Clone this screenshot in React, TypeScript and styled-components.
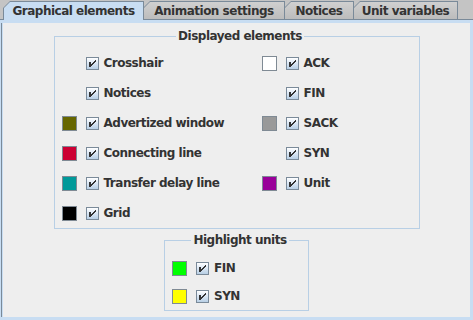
import React from 'react';
import styled, { createGlobalStyle } from 'styled-components';

const GlobalStyle = createGlobalStyle`
  html, body {
    margin: 0;
    padding: 0;
    background: #eeeeee;
  }
  body {
    font-family: 'DejaVu Sans', Verdana, sans-serif;
  }
`;

const Window = styled.div`
  width: 473px;
  height: 320px;
  display: flex;
  flex-direction: column;
  overflow: hidden;
  background: #eeeeee;
`;

const TabStrip = styled.div`
  height: 20px;
  box-sizing: border-box;
  padding: 1px 0 0 3px;
  display: flex;
  align-items: flex-start;
  background: #c4c4c4;
  border-bottom: 1px solid #7a8a99;
`;

const TabEdge = styled.div<{ $active?: boolean; $w: number }>`
  width: ${(p) => p.$w}px;
  height: ${(p) => (p.$active ? 19 : 18)}px;
  margin-left: -1px;
  box-sizing: border-box;
  padding: 1px 1px 0 1px;
  background: #7a8a99;
  clip-path: polygon(0 7px, 7px 0, 100% 0, 100% 100%, 0 100%);
  position: relative;
  z-index: ${(p) => (p.$active ? 1 : 0)};

  &:first-child {
    margin-left: 0;
  }
`;

const TabFace = styled.div<{ $active?: boolean }>`
  height: 100%;
  background: ${(p) => (p.$active ? '#c8ddf2' : 'linear-gradient(#d0d0d0, #bcbcbc)')};
  clip-path: polygon(0 6px, 6px 0, 100% 0, 100% 100%, 0 100%);
  display: flex;
  align-items: center;
  justify-content: center;
  font-weight: bold;
  font-size: 12px;
  letter-spacing: -0.5px;
  color: #333333;
  white-space: nowrap;
`;

const Content = styled.div`
  flex: 1;
  box-sizing: border-box;
  border: 3px solid #c8ddf2;
  border-left-width: 1px;
  box-shadow: inset 1px 0 0 #7a8a99, inset 2px 0 0 #c8ddf2;
  padding: 6px 0 0 2px;
  display: flex;
  flex-direction: column;
  align-items: center;
`;

const Group = styled.fieldset<{ $w: number; $top: number }>`
  width: ${(p) => p.$w}px;
  box-sizing: border-box;
  margin: ${(p) => p.$top}px 0 0 0;
  border: 1px solid #b8cfe5;
  padding: 0 0 0 7px;
  min-inline-size: auto;
`;

const Legend = styled.legend`
  margin: 0 auto;
  padding: 0 2px;
  font-weight: bold;
  font-size: 12px;
  letter-spacing: -0.5px;
  line-height: 14px;
  color: #333333;
`;

const Grid = styled.div`
  padding-top: 5px;
  display: grid;
  grid-template-columns: 200px 150px;
  grid-auto-flow: column;
  grid-template-rows: repeat(6, 30px);
`;

const List = styled.div`
  padding-top: 7px;
  display: flex;
  flex-direction: column;
`;

const Row = styled.div<{ $h: number }>`
  height: ${(p) => p.$h}px;
  display: flex;
  align-items: center;
`;

const Swatch = styled.span<{ $color?: string }>`
  width: 15px;
  height: 15px;
  box-sizing: border-box;
  margin-right: 9px;
  background: ${(p) => p.$color || 'transparent'};
  border: ${(p) => (p.$color ? '1px solid #7f8a94' : 'none')};
`;

const Box = styled.span`
  width: 13px;
  height: 13px;
  box-sizing: border-box;
  margin-right: 5px;
  border: 1px solid #7a8a99;
  background: linear-gradient(180deg, #ffffff 0%, #e4edf7 35%, #b8cfe5 100%);
  display: flex;
`;

const Label = styled.span`
  font-weight: bold;
  font-size: 12px;
  letter-spacing: -0.5px;
  color: #333333;
  white-space: nowrap;
`;

const CheckBox = () => (
  <Box>
    <svg width="11" height="11" viewBox="1 1 11 11" shapeRendering="crispEdges">
      <g fill="#333333">
        <rect x="3" y="5" width="2" height="5" />
        {[0, 1, 2, 3, 4].map((i) => (
          <rect key={i} x={9 - i} y={3 + i} width="1" height="2" />
        ))}
      </g>
    </svg>
  </Box>
);

type Item = { label: string; color?: string };

const displayed: Item[] = [
  { label: 'Crosshair' },
  { label: 'Notices' },
  { label: 'Advertized window', color: '#666600' },
  { label: 'Connecting line', color: '#cc0033' },
  { label: 'Transfer delay line', color: '#009999' },
  { label: 'Grid', color: '#000000' },
  { label: 'ACK', color: '#ffffff' },
  { label: 'FIN' },
  { label: 'SACK', color: '#999999' },
  { label: 'SYN' },
  { label: 'Unit', color: '#990099' },
];

const highlight: Item[] = [
  { label: 'FIN', color: '#00ff00' },
  { label: 'SYN', color: '#ffff00' },
];

const tabs = [
  { name: 'Graphical elements', w: 141 },
  { name: 'Animation settings', w: 142 },
  { name: 'Notices', w: 70 },
  { name: 'Unit variables', w: 105 },
];

export default function App() {
  return (
    <>
      <GlobalStyle />
      <Window>
        <TabStrip>
          {tabs.map((t, i) => (
            <TabEdge key={t.name} $w={t.w} $active={i === 0}>
              <TabFace $active={i === 0}>{t.name}</TabFace>
            </TabEdge>
          ))}
        </TabStrip>
        <Content>
          <Group $w={366} $top={0}>
            <Legend>Displayed elements</Legend>
            <Grid>
              {displayed.map((it) => (
                <Row key={it.label + (it.color || '')} $h={30}>
                  <Swatch $color={it.color} />
                  <CheckBox />
                  <Label>{it.label}</Label>
                </Row>
              ))}
            </Grid>
          </Group>
          <Group $w={145} $top={4}>
            <Legend>Highlight units</Legend>
            <List>
              {highlight.map((it) => (
                <Row key={it.label} $h={28}>
                  <Swatch $color={it.color} />
                  <CheckBox />
                  <Label>{it.label}</Label>
                </Row>
              ))}
            </List>
          </Group>
        </Content>
      </Window>
    </>
  );
}
